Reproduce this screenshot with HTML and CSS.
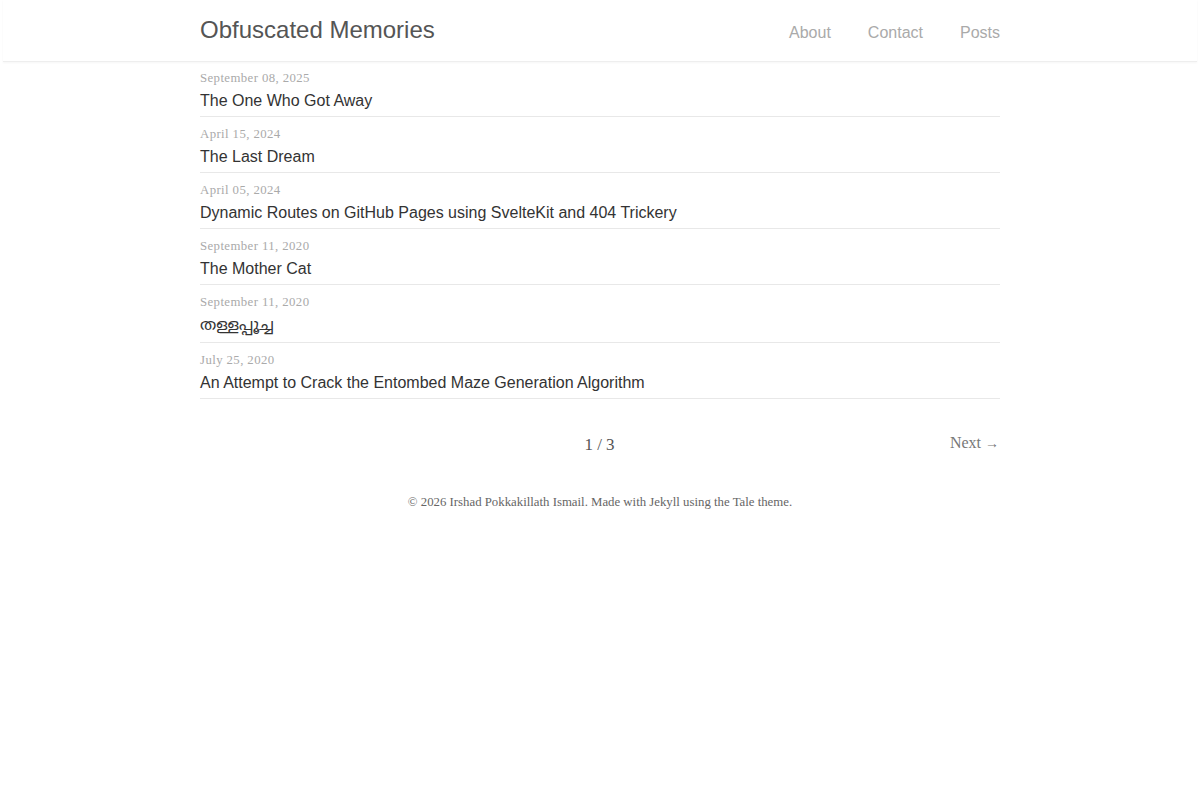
FILE: index.html
```html
<!DOCTYPE html>
<html>
<head>
  <meta charset="utf-8">
  <title>Obfuscated Memories</title>
  <link rel="stylesheet" href="styles.css">
</head>
<body>
  <nav class="nav">
    <div class="nav-container">
      <a class="nav-title" href="#">Obfuscated Memories</a>
      <ul class="nav-links">
        <li><a href="#">About</a></li>
        <li><a href="#">Contact</a></li>
        <li><a href="#">Posts</a></li>
      </ul>
    </div>
  </nav>

  <main class="container">
    <div class="catalogue">
      <a class="catalogue-item" href="#">
        <time class="catalogue-time">September 08, 2025</time>
        <h1 class="catalogue-title">The One Who Got Away</h1>
      </a>
      <a class="catalogue-item" href="#">
        <time class="catalogue-time">April 15, 2024</time>
        <h1 class="catalogue-title">The Last Dream</h1>
      </a>
      <a class="catalogue-item" href="#">
        <time class="catalogue-time">April 05, 2024</time>
        <h1 class="catalogue-title">Dynamic Routes on GitHub Pages using SvelteKit and 404 Trickery</h1>
      </a>
      <a class="catalogue-item" href="#">
        <time class="catalogue-time">September 11, 2020</time>
        <h1 class="catalogue-title">The Mother Cat</h1>
      </a>
      <a class="catalogue-item" href="#">
        <time class="catalogue-time">September 11, 2020</time>
        <h1 class="catalogue-title ml">തള്ളപ്പൂച്ച</h1>
      </a>
      <a class="catalogue-item" href="#">
        <time class="catalogue-time">July 25, 2020</time>
        <h1 class="catalogue-title">An Attempt to Crack the Entombed Maze Generation Algorithm</h1>
      </a>
    </div>

    <div class="pagination">
      <span class="left"></span>
      <span class="page-number">1 / 3</span>
      <a class="right" href="#">Next <span class="arrow">&rarr;</span></a>
    </div>
  </main>

  <footer class="footer">
    <span>&copy; 2026 Irshad Pokkakillath Ismail. Made with Jekyll using the <a href="#">Tale</a> theme.</span>
  </footer>
</body>
</html>
```

FILE: styles.css
```css
html, body { margin: 0; padding: 0; }
body { background: #fff; color: #555; font-family: "Liberation Sans", Arial, sans-serif; }
a { text-decoration: none; color: inherit; }

.nav { border-bottom: 1px solid #eee; box-shadow: 0 1px 2px rgba(0,0,0,.04); margin: 0 3px; }
.nav-container { width: 800px; margin: 0 auto; height: 61px; display: flex; justify-content: space-between; align-items: center; }
.nav-title { font-size: 24px; color: #555; margin-top: -2px; }
.nav-links { list-style: none; margin: 0; padding: 0; display: flex; gap: 37px; }
.nav-links a { font-size: 16px; color: #aaa; margin-top: 4px; display: block; }

.container { width: 800px; margin: -1px auto 0; }

.catalogue-item { display: block; border-bottom: 1px solid #e8e8e8; padding: 9px 0 4px; }
.catalogue-time { display: block; font-family: "Liberation Serif", "Times New Roman", serif; font-size: 12.8px; color: #aaa; letter-spacing: .4px; line-height: 16px; }
.catalogue-title { font-size: 16px; font-weight: normal; color: #333; margin: 4px 0 0; line-height: 22px; }
.catalogue-title.ml { font-family: "Noto Sans Malayalam", "Liberation Sans", sans-serif; line-height: 24px; }

.pagination { display: flex; justify-content: space-between; align-items: center; margin-top: 36px; font-family: "Liberation Serif", "Times New Roman", serif; }
.pagination .left, .pagination .right { width: 100px; }
.page-number { font-size: 17px; color: #555; }
.pagination .right { text-align: right; font-size: 16px; color: #777; margin-top: -4px; padding-right: 1px; }
.arrow { font-size: 14px; }

.footer { text-align: center; font-family: "Liberation Serif", "Times New Roman", serif; font-size: 12.8px; color: #666; margin-top: 40px; }
```
